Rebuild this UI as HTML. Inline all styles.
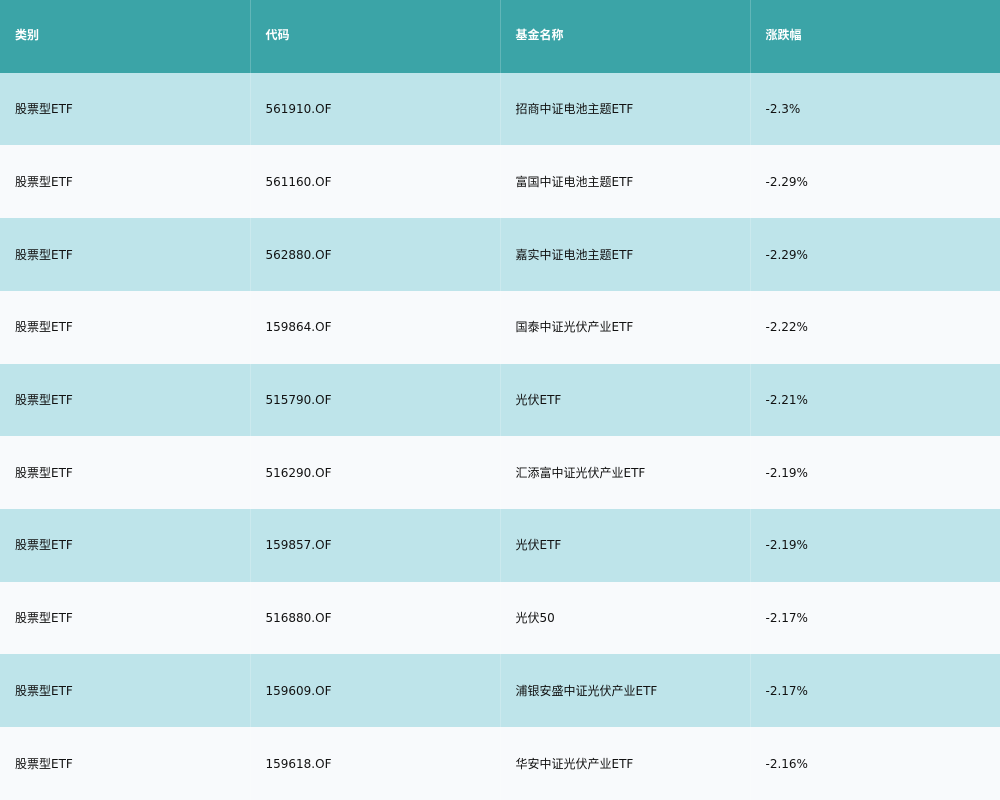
<!DOCTYPE html>
<html><head><meta charset="utf-8"><style>
html,body{margin:0;padding:0;width:1000px;height:800px;overflow:hidden;background:#f8fafc}
table{border-collapse:collapse;width:1000px;table-layout:fixed;font-family:"DejaVu Sans","Noto Sans CJK SC",sans-serif;font-size:12px;color:#111}
td,th{height:72.73px;padding:0 0 0 15px;text-align:left;box-sizing:border-box;line-height:14px}
td+td,th+th{border-left:1px solid rgba(255,255,255,0.2);padding-left:15px}
th{background:#3ba4a7;color:#fff;font-weight:bold;font-size:12px;padding-bottom:3px}
tr:nth-child(even) td{background:#bee4ea}
tr:nth-child(odd) td{background:#f8fafc}
</style></head><body>
<table>
<colgroup><col style="width:250px"><col style="width:250px"><col style="width:250px"><col style="width:250px"></colgroup>
<tr><th>类别</th><th>代码</th><th>基金名称</th><th>涨跌幅</th></tr>
<tr><td>股票型ETF</td><td>561910.OF</td><td>招商中证电池主题ETF</td><td>-2.3%</td></tr>
<tr><td>股票型ETF</td><td>561160.OF</td><td>富国中证电池主题ETF</td><td>-2.29%</td></tr>
<tr><td>股票型ETF</td><td>562880.OF</td><td>嘉实中证电池主题ETF</td><td>-2.29%</td></tr>
<tr><td>股票型ETF</td><td>159864.OF</td><td>国泰中证光伏产业ETF</td><td>-2.22%</td></tr>
<tr><td>股票型ETF</td><td>515790.OF</td><td>光伏ETF</td><td>-2.21%</td></tr>
<tr><td>股票型ETF</td><td>516290.OF</td><td>汇添富中证光伏产业ETF</td><td>-2.19%</td></tr>
<tr><td>股票型ETF</td><td>159857.OF</td><td>光伏ETF</td><td>-2.19%</td></tr>
<tr><td>股票型ETF</td><td>516880.OF</td><td>光伏50</td><td>-2.17%</td></tr>
<tr><td>股票型ETF</td><td>159609.OF</td><td>浦银安盛中证光伏产业ETF</td><td>-2.17%</td></tr>
<tr><td>股票型ETF</td><td>159618.OF</td><td>华安中证光伏产业ETF</td><td>-2.16%</td></tr>
</table>
</body></html>
